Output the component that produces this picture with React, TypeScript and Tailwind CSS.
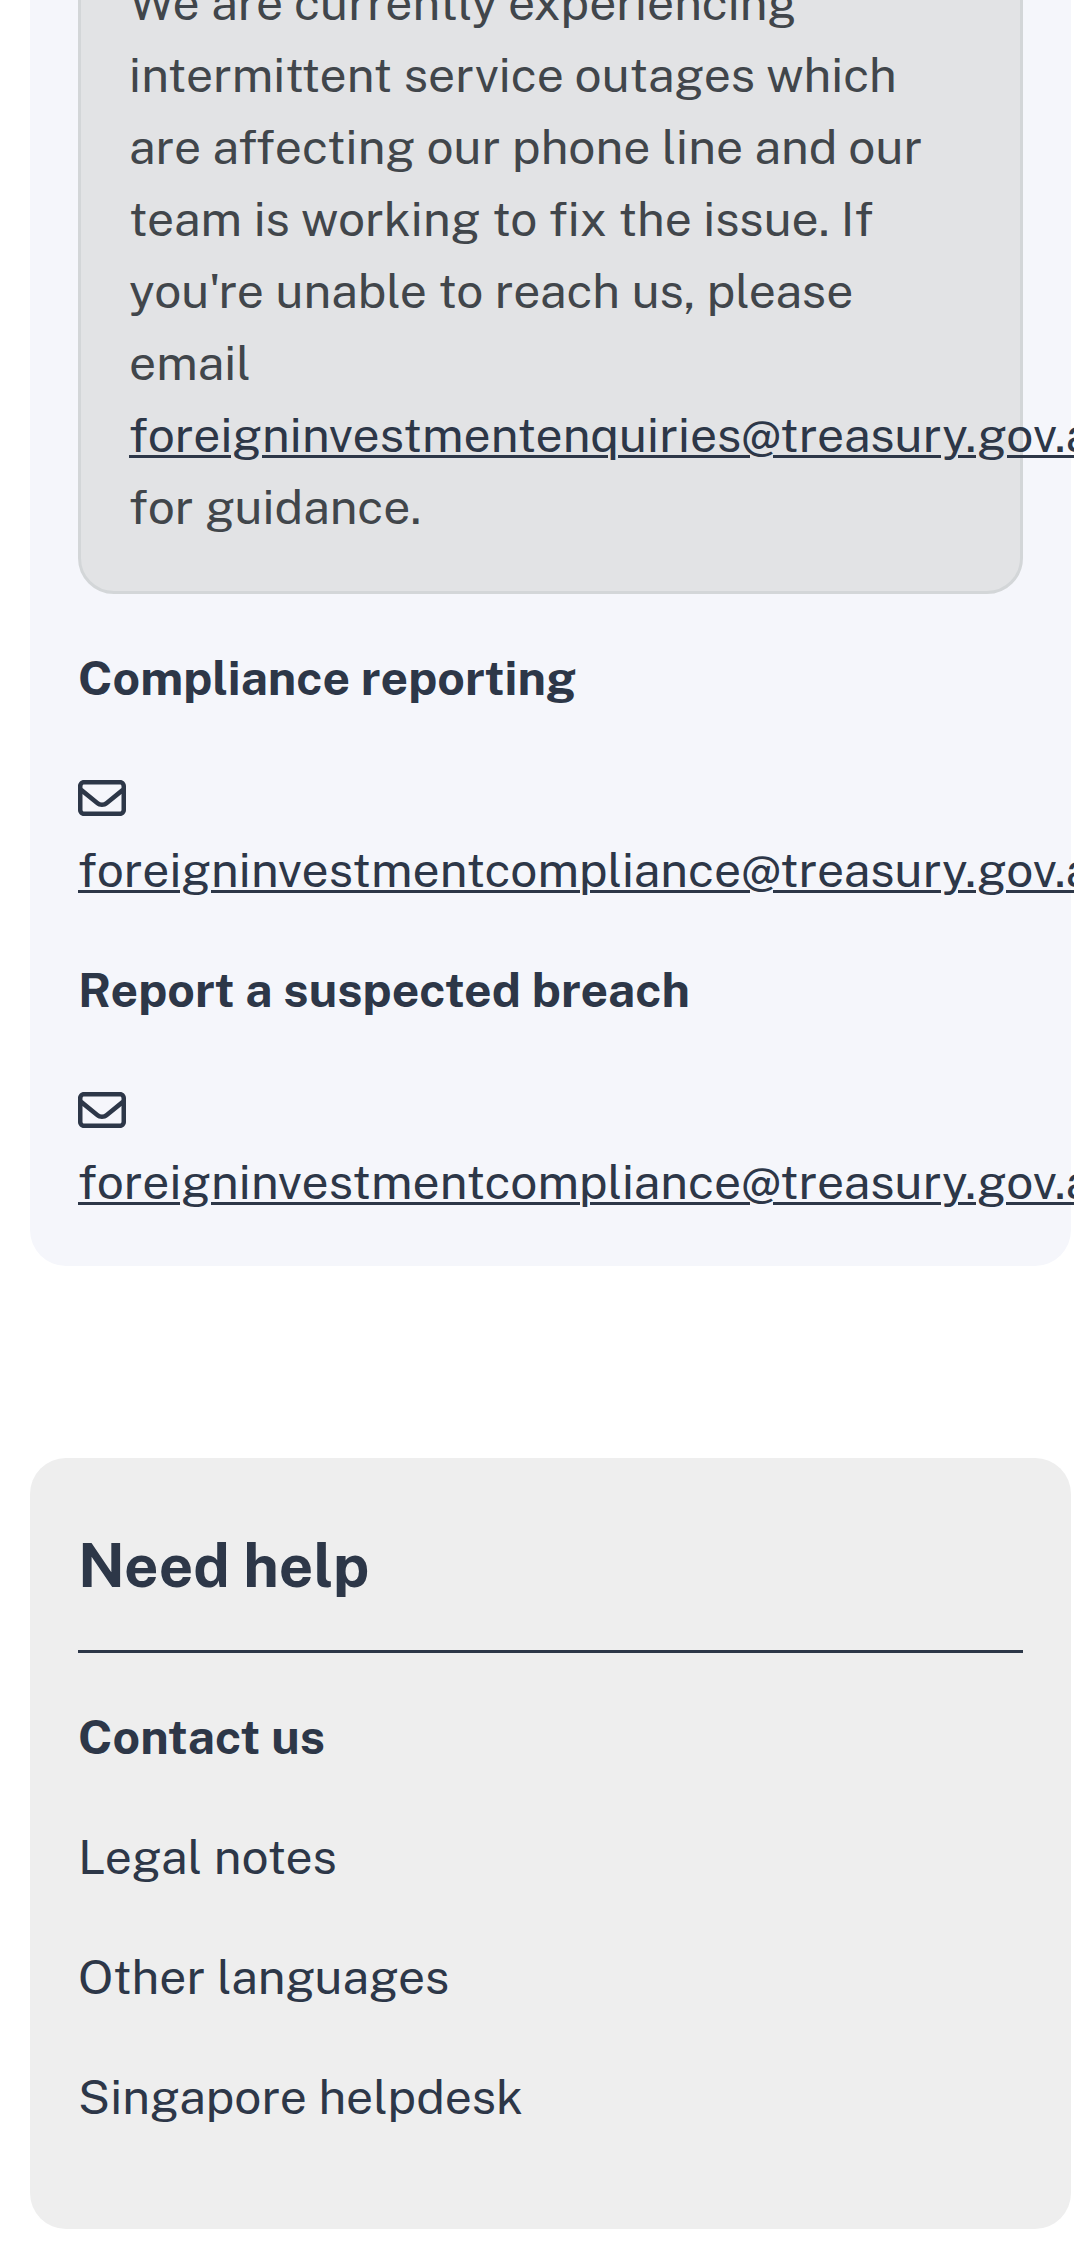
import { FaRegEnvelope } from 'react-icons/fa6';

const reports = [
  {
    title: 'Compliance reporting',
    email: 'foreigninvestmentcompliance@treasury.gov.au',
  },
  {
    title: 'Report a suspected breach',
    email: 'foreigninvestmentcompliance@treasury.gov.au',
  },
];

const helpLinks = [
  { label: 'Contact us', href: '#contact-us', active: true },
  { label: 'Legal notes', href: '#legal-notes', active: false },
  { label: 'Other languages', href: '#other-languages', active: false },
  { label: 'Singapore helpdesk', href: '#singapore-helpdesk', active: false },
];

function EmailLink({ email }: { email: string }) {
  return (
    <a
      href={`mailto:${email}`}
      className="text-[#2d3748] underline decoration-3 underline-offset-3"
    >
      {email}
    </a>
  );
}

export default function App() {
  return (
    <div className="overflow-hidden bg-white pl-[30px] pr-[3px] pb-3 font-['Public_Sans','Open_Sans',sans-serif] text-5xl leading-[72px] text-[#2d3748]">
      <section className="-mt-21 rounded-b-[36px] bg-[#f5f6fb] px-12 pb-12">
        <div className="rounded-[36px] border-3 border-[#d3d6d8] bg-[#e2e3e5] p-12 text-[#41464b]">
          <p>
            We are currently experiencing intermittent service outages which are affecting our phone
            line and our team is working to fix the issue. If you're unable to reach us, please
            email <EmailLink email="foreigninvestmentenquiries@treasury.gov.au" /> for guidance.
          </p>
        </div>

        {reports.map((report) => (
          <div key={report.title} className="pt-12">
            <h3 className="mb-12 font-bold">{report.title}</h3>
            <div className="flex h-[72px] items-center">
              <FaRegEnvelope className="size-12" aria-hidden="true" />
            </div>
            <p>
              <EmailLink email={report.email} />
            </p>
          </div>
        ))}
      </section>

      {/* Side navigation */}
      <nav
        aria-labelledby="need-help"
        className="mt-48 rounded-[36px] bg-[#eeeeee] px-12 pt-[72px] pb-24"
      >
        <h2
          id="need-help"
          className="mb-12 border-b-3 border-[#2d3748] pb-12 text-6xl leading-[72px] font-bold"
        >
          Need help
        </h2>
        <ul className="flex flex-col gap-12">
          {helpLinks.map((link) => (
            <li key={link.label}>
              <a href={link.href} className={link.active ? 'font-bold' : ''}>
                {link.label}
              </a>
            </li>
          ))}
        </ul>
      </nav>
    </div>
  );
}
